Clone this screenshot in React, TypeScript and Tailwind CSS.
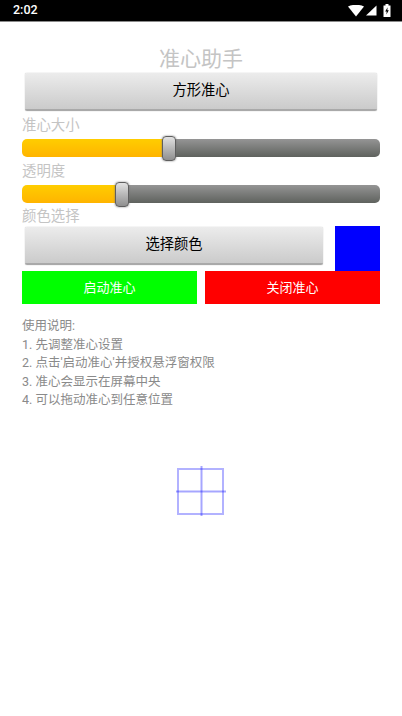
const FONT = "font-['Roboto','Noto_Sans_CJK_SC',sans-serif]"

function StatusBar() {
  return (
    <div className="flex h-[22px] items-center justify-between border-b border-[#8a8a8a] bg-black pl-[13px] pr-[11px] text-white">
      <span className="text-[12.5px] font-medium leading-none">2:02</span>
      <div className="flex items-center">
        <svg width="16" height="12" viewBox="0 0 16 12">
          <path d="M0 1.5C4.5-.8 11.5-.8 16 1.5L8 11.5Z" fill="#fff" />
        </svg>
        <svg width="12" height="11" viewBox="0 0 12 11" className="ml-[1px]">
          <path d="M11.5 0.5V10.5H1Z" fill="#fff" />
        </svg>
        <svg width="8" height="13" viewBox="0 0 8 13" className="ml-[6px]">
          <path d="M2.5 0H5.5V1.5H7.5V13H0.5V1.5H2.5Z" fill="#fff" />
          <path d="M4.6 3.2L2.2 7.4H3.7L3.4 10.4L5.8 6.2H4.3Z" fill="#000" />
        </svg>
      </div>
    </div>
  )
}

function GrayButton({ label, className }: { label: string; className: string }) {
  return (
    <div
      className={`flex h-[38px] items-center justify-center rounded-[2px] border-b-2 border-[#a9a9a9] bg-gradient-to-b from-[#ececec] to-[#cbcbcb] text-[14.3px] text-black shadow-[0_0_1px_#999] ${className}`}
    >
      {label}
    </div>
  )
}

function Slider({ percent }: { percent: number }) {
  return (
    <div className="relative mx-[22px] h-[18px]">
      <div className="flex h-full overflow-hidden rounded-[5px]">
        <div
          className="h-full bg-gradient-to-b from-[#ffcd00] to-[#ffb400]"
          style={{ width: `${percent}%` }}
        />
        <div className="h-full flex-1 bg-gradient-to-b from-[#959595] to-[#5f625e]" />
      </div>
      <div
        className="absolute top-[-3px] h-[25px] w-[14px] -translate-x-1/2 rounded-[4px] border border-[#5e5e5e] bg-gradient-to-b from-[#e2e2e2] to-[#8f8f8f] shadow-[0_0_2px_#777]"
        style={{ left: `${percent}%` }}
      />
    </div>
  )
}

function Label({ text }: { text: string }) {
  return <div className="pl-[22px] text-[14.4px] leading-[18px] text-[#c4c4c4]">{text}</div>
}

function Crosshair() {
  return (
    <svg width="50" height="50" viewBox="0 0 50 50" className="mx-auto mt-[56px] block">
      <rect x="2" y="3" width="45" height="45" fill="none" stroke="#0000ff" strokeOpacity="0.3" strokeWidth="2" />
      <line x1="25.5" y1="0" x2="25.5" y2="50" stroke="#0000ff" strokeOpacity="0.35" strokeWidth="2" />
      <line x1="0" y1="25.5" x2="50" y2="25.5" stroke="#0000ff" strokeOpacity="0.35" strokeWidth="2" />
    </svg>
  )
}

export default function App() {
  return (
    <div className={`h-[716px] w-[402px] overflow-hidden bg-white ${FONT}`}>
      <StatusBar />
      <div className="mt-[24px] text-center text-[21px] leading-[27px] text-[#c4c4c4]">准心助手</div>
      <GrayButton label="方形准心" className="mx-[25px]" />
      <div className="mt-[6px]">
        <Label text="准心大小" />
      </div>
      <div className="mt-[4px]">
        <Slider percent={41} />
      </div>
      <div className="mt-[6px]">
        <Label text="透明度" />
      </div>
      <div className="mt-[4px]">
        <Slider percent={28} />
      </div>
      <div className="mt-[5px]">
        <Label text="颜色选择" />
      </div>
      <div className="flex items-start pl-[25px] pr-[22px]">
        <GrayButton label="选择颜色" className="mt-[1px] w-[298px]" />
        <div className="ml-[12px] h-[45px] w-[45px] bg-[#0000ff]" />
      </div>
      <div className="flex gap-[8px] px-[22px] text-[13px]">
        <div className="flex h-[33px] w-[175px] items-center justify-center bg-[#00ff00] text-white">启动准心</div>
        <div className="flex h-[33px] w-[175px] items-center justify-center bg-[#ff0000] text-white">关闭准心</div>
      </div>
      <div className="mt-[13px] pl-[22px] text-[12.5px] leading-[18.5px] text-[#8a8a8a]">
        <div>使用说明:</div>
        <div>1. 先调整准心设置</div>
        <div>2. 点击'启动准心'并授权悬浮窗权限</div>
        <div>3. 准心会显示在屏幕中央</div>
        <div>4. 可以拖动准心到任意位置</div>
      </div>
      <Crosshair />
    </div>
  )
}
